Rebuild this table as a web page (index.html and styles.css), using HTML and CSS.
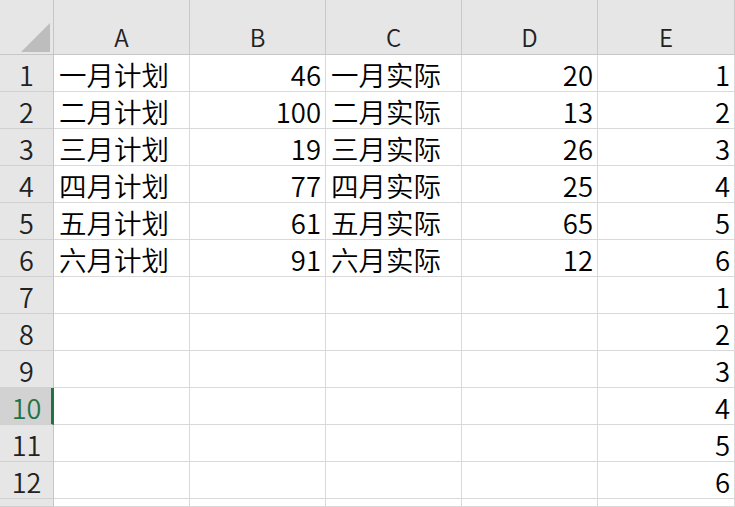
FILE: index.html
```html
<!DOCTYPE html>
<html lang="zh-CN">
<head>
<meta charset="utf-8">
<title>Sheet</title>
<link rel="stylesheet" href="styles.css">
</head>
<body>
<div class="sheet">
  <div class="corner"><div class="tri"></div></div>
  <div class="colh">A</div><div class="colh">B</div><div class="colh">C</div><div class="colh">D</div><div class="colh">E</div>

  <div class="rowh">1</div><div class="c">一月计划</div><div class="c n">46</div><div class="c">一月实际</div><div class="c n">20</div><div class="c n">1</div>
  <div class="rowh">2</div><div class="c">二月计划</div><div class="c n">100</div><div class="c">二月实际</div><div class="c n">13</div><div class="c n">2</div>
  <div class="rowh">3</div><div class="c">三月计划</div><div class="c n">19</div><div class="c">三月实际</div><div class="c n">26</div><div class="c n">3</div>
  <div class="rowh">4</div><div class="c">四月计划</div><div class="c n">77</div><div class="c">四月实际</div><div class="c n">25</div><div class="c n">4</div>
  <div class="rowh">5</div><div class="c">五月计划</div><div class="c n">61</div><div class="c">五月实际</div><div class="c n">65</div><div class="c n">5</div>
  <div class="rowh">6</div><div class="c">六月计划</div><div class="c n">91</div><div class="c">六月实际</div><div class="c n">12</div><div class="c n">6</div>
  <div class="rowh">7</div><div class="c"></div><div class="c"></div><div class="c"></div><div class="c"></div><div class="c n">1</div>
  <div class="rowh">8</div><div class="c"></div><div class="c"></div><div class="c"></div><div class="c"></div><div class="c n">2</div>
  <div class="rowh">9</div><div class="c"></div><div class="c"></div><div class="c"></div><div class="c"></div><div class="c n">3</div>
  <div class="rowh active">10</div><div class="c"></div><div class="c"></div><div class="c"></div><div class="c"></div><div class="c n">4</div>
  <div class="rowh">11</div><div class="c"></div><div class="c"></div><div class="c"></div><div class="c"></div><div class="c n">5</div>
  <div class="rowh">12</div><div class="c"></div><div class="c"></div><div class="c"></div><div class="c"></div><div class="c n">6</div>
  <div class="rowh"></div><div class="c"></div><div class="c"></div><div class="c"></div><div class="c"></div><div class="c"></div>
</div>
</body>
</html>
```

FILE: styles.css
```css
html, body {
  margin: 0;
  padding: 0;
  background: #ffffff;
}
body {
  width: 735px;
  height: 507px;
  overflow: hidden;
  font-family: "Noto Sans CJK SC", "Noto Sans", sans-serif;
  font-weight: 350;
  color: #000;
}
.sheet {
  display: grid;
  grid-template-columns: 54px repeat(4, 136px) 137px;
  grid-template-rows: 55px repeat(12, 37px) 8px;
}
.corner {
  background: #e6e6e6;
  border-right: 1px solid #c6c6c6;
  border-bottom: 1px solid #c6c6c6;
  box-sizing: border-box;
  display: flex;
  justify-content: flex-end;
  align-items: flex-end;
  padding: 0 3px 2px 0;
}
.tri {
  width: 0;
  height: 0;
  border-left: 29px solid transparent;
  border-bottom: 29px solid #bdbdbd;
}
.colh {
  background: #e6e6e6;
  border-right: 1px solid #c9c9c9;
  border-bottom: 1px solid #c6c6c6;
  box-sizing: border-box;
  display: flex;
  justify-content: center;
  align-items: flex-end;
  font-size: 24px;
  line-height: 1.2;
  padding-bottom: 2px;
  color: #222;
}
.rowh {
  background: #e6e6e6;
  border-right: 1px solid #c6c6c6;
  border-bottom: 1px solid #d0d0d0;
  box-sizing: border-box;
  display: flex;
  justify-content: center;
  align-items: flex-end;
  font-size: 27px;
  line-height: 1.2;
  color: #222;
}
.rowh.active {
  background: #d2d2d2;
  color: #217346;
  border-right: 3px solid #217346;
  padding-left: 2px;
}
.c {
  border-right: 1px solid #d9d9d9;
  border-bottom: 1px solid #d9d9d9;
  box-sizing: border-box;
  display: flex;
  align-items: flex-end;
  font-size: 27.5px;
  line-height: 1.2;
  padding: 0 4px 0 5px;
  white-space: nowrap;
}
.c.n {
  justify-content: flex-end;
}
```
